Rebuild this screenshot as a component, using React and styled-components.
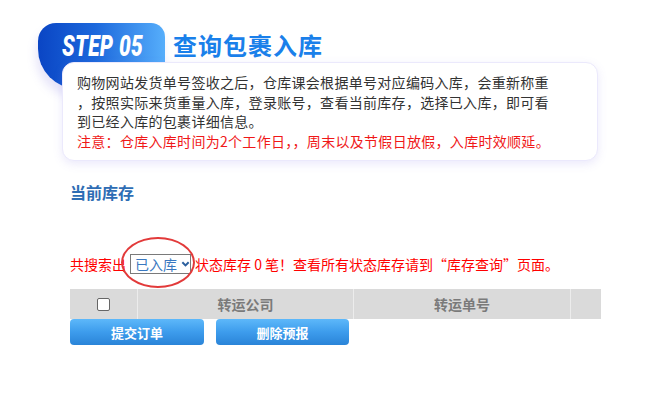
import React from "react";
import styled, { createGlobalStyle } from "styled-components";

const GlobalStyle = createGlobalStyle`
  html, body {
    margin: 0;
    padding: 0;
    background: #fff;
    font-family: "Noto Sans CJK SC", "Noto Sans", sans-serif;
  }
`;

const Page = styled.div`
  width: 660px;
  height: 420px;
  overflow: hidden;
  padding-top: 23px;
  box-sizing: border-box;
`;

const Intro = styled.div`
  padding-left: 38px;
`;

const HeaderRow = styled.div`
  display: flex;
  align-items: flex-start;
`;

const Badge = styled.div`
  width: 127px;
  height: 66px;
  border-radius: 18px 14px 0 40px;
  background: linear-gradient(90deg, #0a45c4 0%, #1c68dc 45%, #56aefb 100%);
  box-shadow: -2px 8px 10px rgba(120, 110, 220, 0.18);
  padding: 8px 0 0 24px;
  box-sizing: border-box;
`;

const StepText = styled.span`
  display: inline-block;
  color: #fff;
  font-family: Roboto, "Liberation Sans", sans-serif;
  font-weight: 900;
  font-style: italic;
  font-size: 29px;
  line-height: 30px;
  letter-spacing: 0.5px;
  transform: scaleX(0.72);
  transform-origin: left center;
  white-space: nowrap;
`;

const Title = styled.div`
  margin-left: 8px;
  padding-top: 6px;
  font-size: 24px;
  line-height: 32px;
  font-weight: 700;
  letter-spacing: 1px;
  color: #1a80ea;
`;

const Card = styled.div`
  position: relative;
  z-index: 1;
  margin: -27px 0 0 24px;
  width: 536px;
  box-sizing: border-box;
  padding: 10px 10px 9px 14px;
  background: #fff;
  border: 1px solid #ebe9fc;
  border-radius: 12px;
  box-shadow: 0 3px 10px rgba(130, 120, 230, 0.16);
`;

const Line = styled.div`
  font-size: 14px;
  line-height: 19.5px;
  letter-spacing: 0.3px;
  white-space: nowrap;
  color: ${(p) => (p.$warn ? "#f01818" : "#333")};
`;

const Content = styled.div`
  padding: 22px 0 0 70px;
`;

const SectionTitle = styled.div`
  font-size: 16px;
  line-height: 18px;
  font-weight: 700;
  color: #2e6db4;
`;

const Notice = styled.div`
  margin-top: 53px;
  display: flex;
  align-items: center;
  font-size: 14px;
  line-height: 20px;
  color: #ff0000;
  white-space: nowrap;
`;

const SelectWrap = styled.span`
  position: relative;
  display: inline-flex;
  margin: 0 4px 0 4px;
`;

const SelectBox = styled.span`
  display: inline-flex;
  align-items: center;
  gap: 4px;
  width: 61px;
  height: 20px;
  box-sizing: border-box;
  padding-left: 4px;
  border: 1px solid #7a7a7a;
  color: #3a78c0;
  font-size: 14px;
  line-height: 18px;
`;

const Ellipse = styled.span`
  position: absolute;
  left: -9px;
  top: -17px;
  width: 74px;
  height: 51px;
  border: 2px solid #e23a3a;
  border-radius: 50%;
  box-sizing: border-box;
  pointer-events: none;
`;

const TableClip = styled.div`
  margin-top: 15px;
  width: 531px;
  overflow: hidden;
`;

const HeadRow = styled.div`
  display: grid;
  grid-template-columns: 67px 216px 217px 31px;
  height: 30px;
  background: #dadada;
`;

const HeadCell = styled.div`
  display: flex;
  align-items: center;
  justify-content: center;
  border-left: ${(p) => (p.$first ? "none" : "1px solid #ececec")};
  font-size: 14px;
  font-weight: 700;
  color: #7a7a7a;
`;

const Check = styled.span`
  width: 11px;
  height: 11px;
  border: 1px solid #666;
  border-radius: 2px;
  background: #fff;
`;

const Buttons = styled.div`
  display: flex;
  gap: 12px;
`;

const Button = styled.button`
  width: ${(p) => p.$w}px;
  height: 26px;
  border: none;
  border-radius: 4px;
  background: linear-gradient(180deg, #5db8fa 0%, #3d9cec 50%, #2a84d8 100%);
  color: #fff;
  font-family: "Noto Sans CJK SC", sans-serif;
  font-size: 13px;
  font-weight: 700;
  padding: 0;
  cursor: pointer;
`;

function Chevron() {
  return (
    <svg width="10" height="8" viewBox="0 0 10 8">
      <path d="M1.5 2 L5 5.5 L8.5 2" fill="none" stroke="#2b5f9e" strokeWidth="2.2" />
    </svg>
  );
}

export default function App() {
  return (
    <Page>
      <GlobalStyle />
      <Intro>
        <HeaderRow>
          <Badge>
            <StepText>STEP 05</StepText>
          </Badge>
          <Title>查询包裹入库</Title>
        </HeaderRow>
        <Card>
          <Line>购物网站发货单号签收之后，仓库课会根据单号对应编码入库，会重新称重</Line>
          <Line>，按照实际来货重量入库，登录账号，查看当前库存，选择已入库，即可看</Line>
          <Line>到已经入库的包裹详细信息。</Line>
          <Line $warn>注意：仓库入库时间为2个工作日，，周末以及节假日放假，入库时效顺延。</Line>
        </Card>
      </Intro>
      <Content>
        <SectionTitle>当前库存</SectionTitle>
        <Notice>
          共搜索出
          <SelectWrap>
            <SelectBox>
              已入库
              <Chevron />
            </SelectBox>
            <Ellipse />
          </SelectWrap>
          状态库存 0 笔！查看所有状态库存请到“库存查询”页面。
        </Notice>
        <TableClip>
          <HeadRow>
            <HeadCell $first>
              <Check />
            </HeadCell>
            <HeadCell>转运公司</HeadCell>
            <HeadCell>转运单号</HeadCell>
            <HeadCell />
          </HeadRow>
        </TableClip>
        <Buttons>
          <Button $w={134}>提交订单</Button>
          <Button $w={133}>删除预报</Button>
        </Buttons>
      </Content>
    </Page>
  );
}
